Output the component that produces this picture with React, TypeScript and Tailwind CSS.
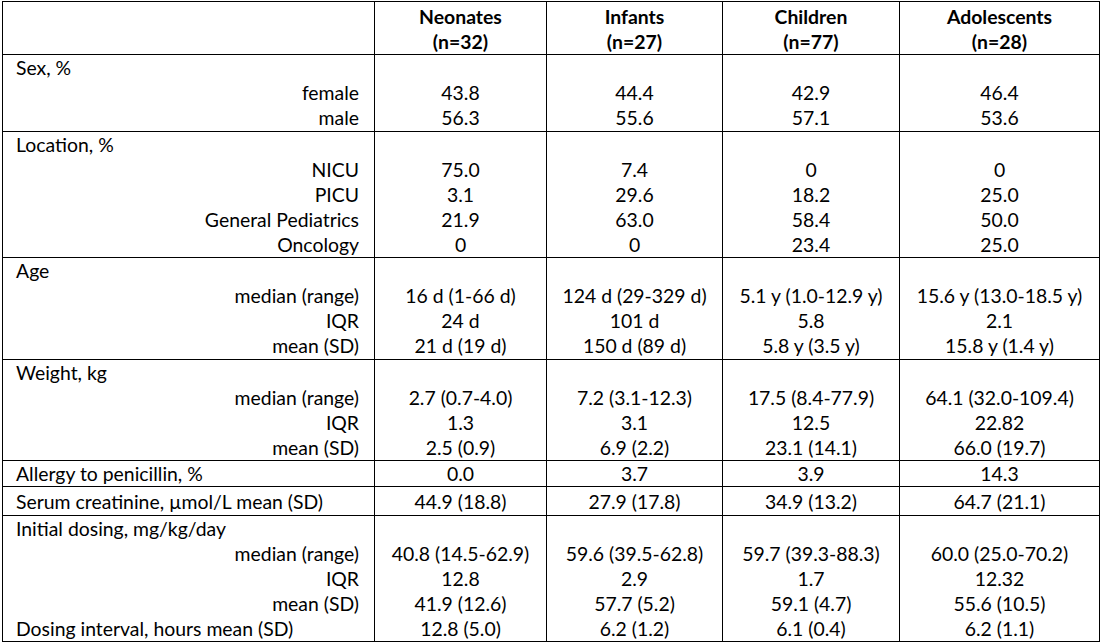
const cols = [
  { name: "Neonates", n: 32 },
  { name: "Infants", n: 27 },
  { name: "Children", n: 77 },
  { name: "Adolescents", n: 28 },
];

type Group = {
  label: string;
  subs: string[];
  values: string[][]; // per column, one entry per sub line
  height: string;
  tail?: { label: string; values: string[] };
};

const groups: Group[] = [
  {
    label: "Sex, %",
    subs: ["female", "male"],
    values: [
      ["43.8", "56.3"],
      ["44.4", "55.6"],
      ["42.9", "57.1"],
      ["46.4", "53.6"],
    ],
    height: "h-[77px]",
  },
  {
    label: "Location, %",
    subs: ["NICU", "PICU", "General Pediatrics", "Oncology"],
    values: [
      ["75.0", "3.1", "21.9", "0"],
      ["7.4", "29.6", "63.0", "0"],
      ["0", "18.2", "58.4", "23.4"],
      ["0", "25.0", "50.0", "25.0"],
    ],
    height: "h-[126px]",
  },
  {
    label: "Age",
    subs: ["median (range)", "IQR", "mean (SD)"],
    values: [
      ["16 d (1-66 d)", "24 d", "21 d (19 d)"],
      ["124 d (29-329 d)", "101 d", "150 d (89 d)"],
      ["5.1 y (1.0-12.9 y)", "5.8", "5.8 y (3.5 y)"],
      ["15.6 y (13.0-18.5 y)", "2.1", "15.8 y (1.4 y)"],
    ],
    height: "h-[102px]",
  },
  {
    label: "Weight, kg",
    subs: ["median (range)", "IQR", "mean (SD)"],
    values: [
      ["2.7 (0.7-4.0)", "1.3", "2.5 (0.9)"],
      ["7.2 (3.1-12.3)", "3.1", "6.9 (2.2)"],
      ["17.5 (8.4-77.9)", "12.5", "23.1 (14.1)"],
      ["64.1 (32.0-109.4)", "22.82", "66.0 (19.7)"],
    ],
    height: "h-[101px]",
  },
  {
    label: "Allergy to penicillin, %",
    subs: [],
    values: [["0.0"], ["3.7"], ["3.9"], ["14.3"]],
    height: "h-[26px]",
  },
  {
    label: "Serum creatinine, µmol/L mean (SD)",
    subs: [],
    values: [["44.9 (18.8)"], ["27.9 (17.8)"], ["34.9 (13.2)"], ["64.7 (21.1)"]],
    height: "h-[29px]",
  },
  {
    label: "Initial dosing, mg/kg/day",
    subs: ["median (range)", "IQR", "mean (SD)"],
    values: [
      ["40.8 (14.5-62.9)", "12.8", "41.9 (12.6)"],
      ["59.6 (39.5-62.8)", "2.9", "57.7 (5.2)"],
      ["59.7 (39.3-88.3)", "1.7", "59.1 (4.7)"],
      ["60.0 (25.0-70.2)", "12.32", "55.6 (10.5)"],
    ],
    height: "h-[124px]",
    tail: {
      label: "Dosing interval, hours mean (SD)",
      values: ["12.8 (5.0)", "6.2 (1.2)", "6.1 (0.4)", "6.2 (1.1)"],
    },
  },
];

export default function App() {
  return (
    <div
      className="w-[1102px] h-[642px] bg-white text-black text-[19.4px] leading-[25px] pl-[2px] pt-px"
      style={{ fontFamily: "Lato, 'Liberation Sans', sans-serif" }}
    >
      <table className="border-collapse table-fixed w-[1097px]">
        <colgroup>
          <col className="w-[372px]" />
          <col className="w-[172px]" />
          <col className="w-[176px]" />
          <col className="w-[177px]" />
          <col className="w-[200px]" />
        </colgroup>
        <thead>
          <tr className="h-[52px]">
            <th className="border border-black p-0"></th>
            {cols.map((c) => (
              <th key={c.name} className="border border-black p-0 pt-[2px] align-top text-center font-bold">
                <div>{c.name}</div>
                <div>(n={c.n})</div>
              </th>
            ))}
          </tr>
        </thead>
        <tbody>
          {groups.map((g) => {
            const single = g.subs.length === 0;
            return (
              <tr key={g.label} className={g.height}>
                <td className={`border border-black p-0 ${single ? "align-middle" : "align-top"}`}>
                  <div className="pl-[13px]">{g.label}</div>
                  {g.subs.map((s) => (
                    <div key={s} className="text-right pr-[15px]">
                      {s}
                    </div>
                  ))}
                  {g.tail && <div className="pl-[13px]">{g.tail.label}</div>}
                </td>
                {g.values.map((vals, ci) => (
                  <td
                    key={ci}
                    className={`border border-black p-0 text-center ${single ? "align-middle" : "align-top"}`}
                  >
                    {!single && <div>&nbsp;</div>}
                    {vals.map((v, vi) => (
                      <div key={vi}>{v}</div>
                    ))}
                    {g.tail && <div>{g.tail.values[ci]}</div>}
                  </td>
                ))}
              </tr>
            );
          })}
        </tbody>
      </table>
    </div>
  );
}
